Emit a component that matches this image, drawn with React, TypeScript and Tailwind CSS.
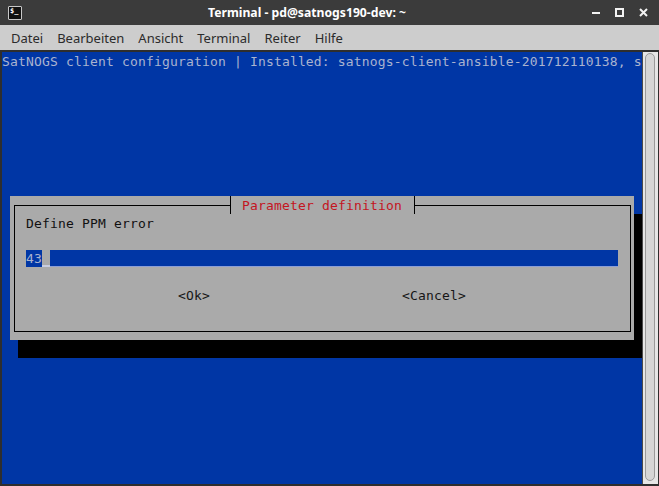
import React from "react";

const mono = { fontFamily: '"DejaVu Sans Mono", "Liberation Mono", monospace' };
const sans = { fontFamily: '"Noto Sans", "Open Sans", sans-serif' };

function TitleBar() {
  return (
    <div className="h-[25px] bg-[#3b3b3b] flex items-center shrink-0" style={sans}>
      <div className="w-[30px] h-full flex items-center pl-[8px]">
        <div className="w-[14px] h-[14px] border border-[#c8c8c8] bg-[#111] rounded-[1px] flex items-start justify-start pl-[1px] pt-[0px]">
          <span className="text-[7px] leading-[8px] font-bold text-white" style={mono}>$_</span>
        </div>
      </div>
      <div className="flex-1 text-center text-white font-bold text-[12.2px] leading-[25px] whitespace-nowrap">
        Terminal - pd@satnogs190-dev: ~
      </div>
      <div className="w-[75px] h-full flex items-center pl-[8px]">
        <svg width="60" height="12" viewBox="0 0 60 12" className="block">
          <rect x="0" y="5" width="8" height="2" fill="#f2f2f2" />
          <rect x="24" y="2" width="7" height="7" fill="none" stroke="#f2f2f2" strokeWidth="2" />
          <path d="M48 2 L55 9 M55 2 L48 9" stroke="#f2f2f2" strokeWidth="2" />
        </svg>
      </div>
    </div>
  );
}

function MenuBar() {
  const items = ["Datei", "Bearbeiten", "Ansicht", "Terminal", "Reiter", "Hilfe"];
  return (
    <div className="h-[25px] bg-[#cdcdcd] flex items-center pl-[11px] gap-[14px] shrink-0 text-[13px] text-[#2b2b2b]" style={sans}>
      {items.map((t) => (
        <span key={t} className="leading-[25px] pt-[1px]">{t}</span>
      ))}
    </div>
  );
}

function Dialog() {
  return (
    <div className="relative ml-[8px] mt-[126px] w-[624px] h-[144px] bg-[#aaaaaa] shadow-[8px_18px_0_0_#000] pl-[4px] pt-[9px] pr-[3px] pb-[8px]">
      <div className="h-full border border-black pl-[11px] pt-[8px]">
        <div className="h-[18px] pt-[1px] leading-[17px] text-[#111] whitespace-pre">Define PPM error</div>
        <div className="h-[18px]" />
        <div className="h-[18px] flex items-start">
          <span className="h-[17px] w-[16px] bg-[#0036a5] text-[#aab3cf] pt-[1px] leading-[16px] whitespace-pre">43</span>
          <span className="h-[17px] w-[8px] border-b-2 border-[#c9cde0]" />
          <span className="w-[568px] h-[17px] bg-[#0036a5] border-b border-[#8c9fd6]" />
        </div>
        <div className="h-[18px]" />
        <div className="h-[18px] pt-[1px] leading-[17px] flex text-[#161616] whitespace-pre">
          <span className="ml-[152px]">&lt;Ok&gt;</span>
          <span className="ml-[192px]">&lt;Cancel&gt;</span>
        </div>
      </div>
      <div className="absolute left-[220px] top-0 h-[18px] w-[185px] bg-[#aaaaaa] border-l border-r border-black pl-[11px] pt-[1px] leading-[17px] text-[#c4151f] whitespace-pre">
        Parameter definition
      </div>
    </div>
  );
}

function Terminal() {
  return (
    <div className="w-[640px] h-[432px] bg-[#0036a5] overflow-hidden text-[13px] tracking-[0.17px]" style={mono}>
      <div className="h-[18px] pt-[1px] leading-[17px] text-[#aab3cf] whitespace-pre">
        SatNOGS client configuration | Installed: satnogs-client-ansible-201712110138, s
      </div>
      <Dialog />
    </div>
  );
}

function Scrollbar() {
  return (
    <div className="w-[16px] h-[432px] bg-[#e6e6e6] border-l border-[#4a4a4a] pl-[2px] pt-[1px]">
      <div className="w-[10px] h-[428px] rounded-[5px] border border-[#9a9a9a] bg-[#d6d6d6]" />
    </div>
  );
}

export default function App() {
  return (
    <div className="w-[659px] h-[486px] bg-[#2e2e2e] flex flex-col overflow-hidden">
      <TitleBar />
      <MenuBar />
      <div className="flex pl-[2px] pt-[2px]">
        <Terminal />
        <Scrollbar />
      </div>
    </div>
  );
}
